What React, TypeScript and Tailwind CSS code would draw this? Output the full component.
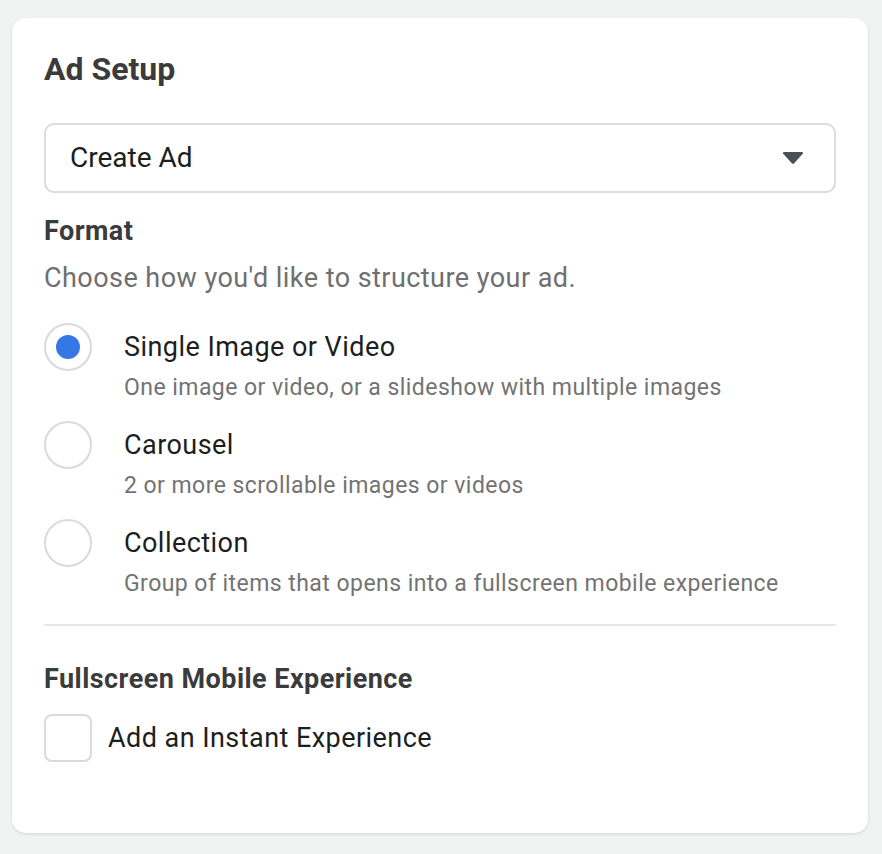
import React, { useState } from 'react';

type Option = { id: string; title: string; description: string };

const formats: Option[] = [
    { id: 'single', title: 'Single Image or Video', description: 'One image or video, or a slideshow with multiple images' },
    { id: 'carousel', title: 'Carousel', description: '2 or more scrollable images or videos' },
    { id: 'collection', title: 'Collection', description: 'Group of items that opens into a fullscreen mobile experience' },
];

const Radio: React.FC<{ checked: boolean }> = ({ checked }) => (
    <span className="flex h-12 w-12 shrink-0 items-center justify-center rounded-full border-2 border-[#dadada] bg-white">
        {checked && <span className="h-6 w-6 rounded-full bg-[#3578e5]" />}
    </span>
);

export default function App() {
    const [format, setFormat] = useState('single');
    const [instant, setInstant] = useState(false);

    return (
        <div
            className="min-h-screen bg-[#f1f2f2] pl-3 pt-[18px]"
            style={{ fontFamily: 'Roboto, "Noto Sans", Arial, sans-serif' }}
        >
            <div className="flex h-[815px] w-[856px] flex-col rounded-[14px] bg-white px-8 pt-8 shadow-[0_1px_3px_rgba(0,0,0,0.12)]">
                <h2 className="text-[32px] font-bold leading-[38px] text-[#3b3b3b]">Ad Setup</h2>

                {/* Ad select */}
                <button className="mt-[35px] flex h-[70px] w-full items-center justify-between rounded-[10px] border-2 border-[#dcdcdc] pl-[24px] pr-[30px] text-left">
                    <span className="text-[28px] leading-[34px] text-[#1c1e21]">Create Ad</span>
                    <svg width="22" height="12" viewBox="0 0 22 12">
                        <path d="M1 1.5 Q0.5 0 2.5 0 H19.5 Q21.5 0 21 1.5 L12.2 11.2 Q11 12.3 9.8 11.2 Z" fill="#4b4f56" />
                    </svg>
                </button>

                <h3 className="mt-[22px] text-[27px] font-bold leading-[32px] tracking-[0.45px] text-[#3b3b3b]">Format</h3>
                <p className="mt-[15px] text-[27px] leading-[32px] tracking-[0.45px] text-[#6f6f6f]">
                    Choose how you'd like to structure your ad.
                </p>

                <div className="mt-[29px] flex flex-col gap-[19px]">
                    {formats.map((opt) => (
                        <label key={opt.id} className="flex cursor-pointer items-start gap-8" onClick={() => setFormat(opt.id)}>
                            <Radio checked={format === opt.id} />
                            <div className="pt-2">
                                <div className="text-[27px] leading-[32px] tracking-[0.45px] text-[#1c1e21]">{opt.title}</div>
                                <div className="mt-[11px] text-[23px] leading-[28px] tracking-[0.45px] text-[#737373]">{opt.description}</div>
                            </div>
                        </label>
                    ))}
                </div>

                <div className="mt-[26px] h-[2px] bg-[#e6e6e6]" />

                <h3 className="mt-[37px] text-[27px] font-bold leading-[32px] tracking-[0.45px] text-[#3b3b3b]">
                    Fullscreen Mobile Experience
                </h3>

                <label className="mt-[19px] flex cursor-pointer items-center gap-4" onClick={() => setInstant(!instant)}>
                    <span className="flex h-12 w-12 shrink-0 items-center justify-center rounded-[8px] border-2 border-[#dadada] bg-white">
                        {instant && (
                            <svg width="24" height="24" viewBox="0 0 24 24">
                                <path d="M5 12l5 5 9-10" stroke="#3578e5" strokeWidth="3" fill="none" />
                            </svg>
                        )}
                    </span>
                    <span className="text-[27px] leading-[32px] tracking-[0.45px] text-[#1c1e21]">Add an Instant Experience</span>
                </label>
            </div>
        </div>
    );
}
